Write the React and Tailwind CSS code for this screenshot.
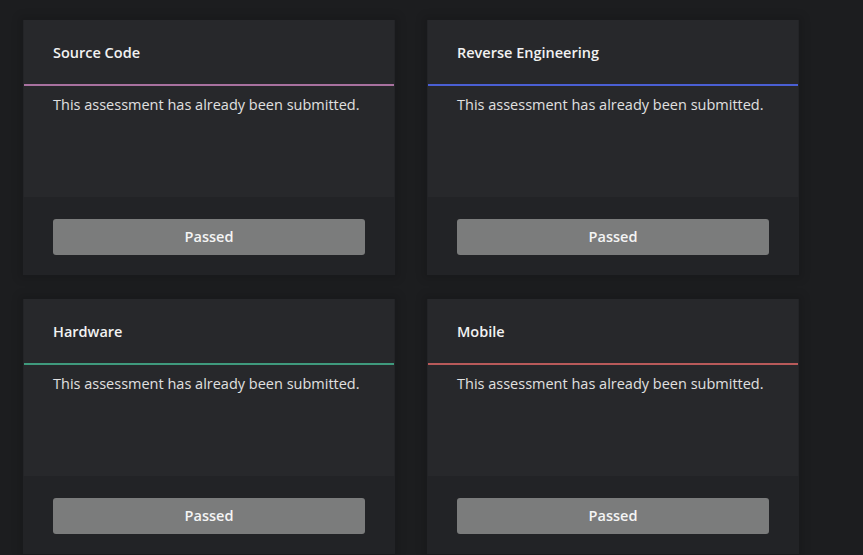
const cards = [
  { title: 'Source Code', line: 'bg-[#a8719f]' },
  { title: 'Reverse Engineering', line: 'bg-[#4a5fd4]' },
  { title: 'Hardware', line: 'bg-[#3f9a7d]' },
  { title: 'Mobile', line: 'bg-[#b85a5a]' },
];

const Card = ({ title, line }) => (
  <div className="flex flex-col bg-[#222326] shadow-[0_0_8px_4px_rgba(0,0,0,0.12)]">
    <div className="bg-[#27282b] border-x border-[#232427]">
      <div className="h-[64px] flex items-center px-[29px] pt-[1px]">
        <h2 className="text-[14.5px] font-semibold text-[#f2f2f2]">{title}</h2>
      </div>
      <div className={`h-[2px] ${line}`} />
      <div className="h-[111px] px-[29px] pt-[8px]">
        <p className="text-[14.5px] text-[#e0e0e0]">This assessment has already been submitted.</p>
      </div>
    </div>
    <div className="px-[30px] pt-[22px] pb-[20px]">
      <button className="w-[312px] h-[36px] rounded-[3px] bg-[#7b7c7c] text-[14.5px] font-semibold text-[#f4f4f4]">
        Passed
      </button>
    </div>
  </div>
);

export default function App() {
  return (
    <div className="w-[863px] h-[555px] overflow-hidden bg-[#1c1d1f] font-['Open_Sans',sans-serif]">
      <div className="grid grid-cols-[372px_372px] gap-x-[32px] gap-y-[24px] pl-[23px] pt-[20px]">
        {cards.map((c) => (
          <Card key={c.title} {...c} />
        ))}
      </div>
    </div>
  );
}
